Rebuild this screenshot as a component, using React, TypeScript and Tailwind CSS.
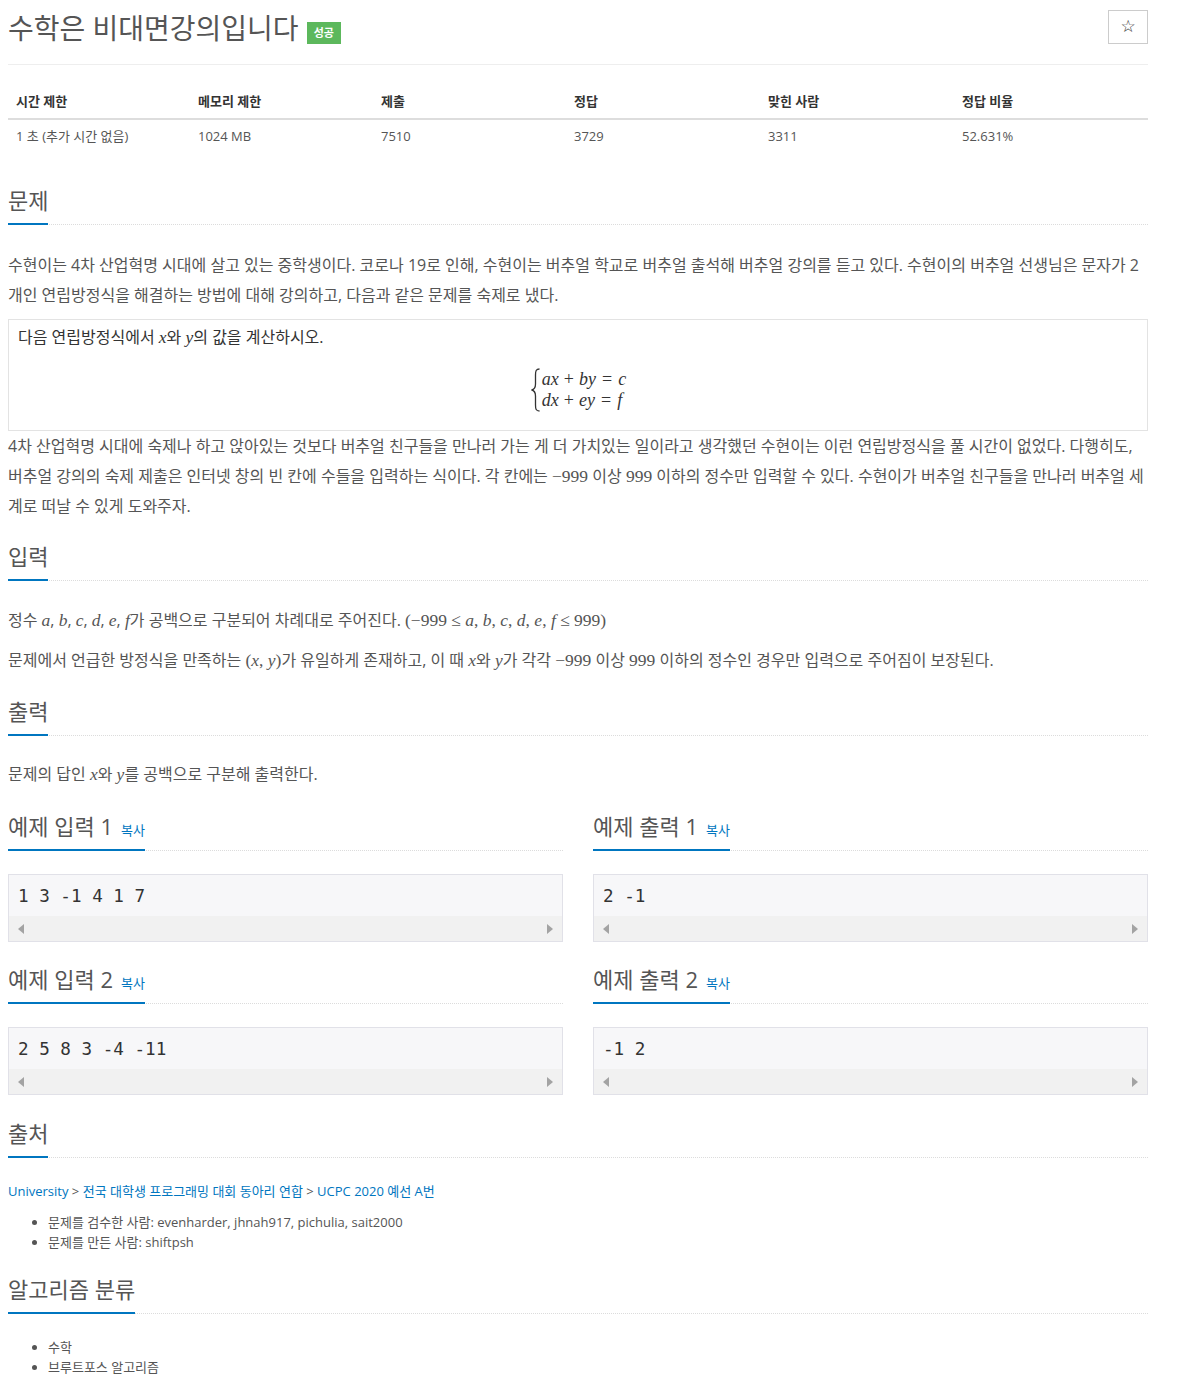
import React from 'react'

const SANS = "font-['Open_Sans','Noto_Sans_CJK_KR',sans-serif]"

const STATS = [
  { label: '시간 제한', value: '1 초 (추가 시간 없음)', w: 'w-[182px]' },
  { label: '메모리 제한', value: '1024 MB', w: 'w-[183px]' },
  { label: '제출', value: '7510', w: 'w-[193px]' },
  { label: '정답', value: '3729', w: 'w-[194px]' },
  { label: '맞힌 사람', value: '3311', w: 'w-[194px]' },
  { label: '정답 비율', value: '52.631%', w: 'w-[194px]' },
]

const SAMPLES = [
  { n: 1, input: '1 3 -1 4 1 7', output: '2 -1', mt: 'mt-[22px]' },
  { n: 2, input: '2 5 8 3 -4 -11', output: '-1 2', mt: 'mt-[22px]' },
]

// italic math variable
function V({ children }: { children: React.ReactNode }) {
  return <i className="font-['Liberation_Serif',serif] text-[17.5px]">{children}</i>
}

// upright math (numbers, operators)
function N({ children }: { children: React.ReactNode }) {
  return <span className="font-['Liberation_Serif',serif] text-[17.5px]">{children}</span>
}

function Headline({ children, extra }: { children: React.ReactNode; extra?: React.ReactNode }) {
  return (
    <div className="flex items-end border-b border-dotted border-[#dcdcdc]">
      <h2 className="-mb-px border-b-2 border-[#0076c0] pb-[8px] text-[22px] leading-[30px] text-[#555] font-normal">
        {children}
        {extra}
      </h2>
    </div>
  )
}

function CopyLink() {
  return <span className="ml-[8px] text-[13px] leading-[13px] text-[#0076c0]">복사</span>
}

function SampleBox({ text }: { text: string }) {
  return (
    <div className="border border-[#e1e1e8] bg-[#f7f7f9]">
      <div className="h-[41px] pl-[9px] pt-[2px] flex items-center font-['DejaVu_Sans_Mono',monospace] text-[17.6px] text-[#333] whitespace-pre">
        {text}
      </div>
      <div className="h-[25px] bg-[#f1f1f1] flex items-center justify-between px-[9px]">
        <svg width="6" height="10" viewBox="0 0 6 10"><path d="M6 0 L0 5 L6 10 Z" fill="#a3a3a3" /></svg>
        <svg width="6" height="10" viewBox="0 0 6 10"><path d="M0 0 L6 5 L0 10 Z" fill="#a3a3a3" /></svg>
      </div>
    </div>
  )
}

function Brace() {
  return (
    <svg width="11" height="44" viewBox="0 0 11 44" className="mr-[1px]">
      <path
        d="M9.5 1 C6 1 5.5 3 5.5 7 L5.5 16 C5.5 20 4.5 21.5 1.5 22 C4.5 22.5 5.5 24 5.5 28 L5.5 37 C5.5 41 6 43 9.5 43"
        fill="none"
        stroke="#333"
        strokeWidth="1.3"
      />
    </svg>
  )
}

export default function App() {
  return (
    <div className={`${SANS} bg-white min-h-screen px-[8px] pb-[10px] text-[#555]`}>
      <div className="w-[1140px]">
        {/* title row */}
        <div className="flex items-start justify-between pt-[10px]">
          <div className="flex items-start">
            <h1 className="text-[28px] leading-[36px] text-[#555] font-normal">수학은 비대면강의입니다</h1>
            <span className="ml-[8px] mt-[12px] h-[22px] px-[7px] flex items-center bg-[#5cb85c] text-white text-[11px] font-bold">성공</span>
          </div>
          <button className="w-[40px] h-[34px] border border-[#ccc] bg-white flex items-center justify-center text-[17px] text-[#333] font-['DejaVu_Sans',sans-serif]">
            ☆
          </button>
        </div>
        <div className="mt-[18px] h-px bg-[#eee]" />

        {/* stats table */}
        <table className="mt-[20px] w-full border-collapse text-[13px]">
          <thead>
            <tr className="border-b-2 border-[#ddd]">
              {STATS.map(s => (
                <th key={s.label} className={`${s.w} h-[34px] px-[8px] text-left font-bold text-[#333]`}>{s.label}</th>
              ))}
            </tr>
          </thead>
          <tbody>
            <tr>
              {STATS.map(s => (
                <td key={s.label} className="h-[34px] px-[8px] text-[#555]">{s.value}</td>
              ))}
            </tr>
          </tbody>
        </table>

        {/* 문제 */}
        <section className="mt-[32px]">
          <Headline>문제</Headline>
          <div className="mt-[25px] text-[16px] leading-[30px]">
            <div className="whitespace-nowrap">수현이는 4차 산업혁명 시대에 살고 있는 중학생이다. 코로나 19로 인해, 수현이는 버추얼 학교로 버추얼 출석해 버추얼 강의를 듣고 있다. 수현이의 버추얼 선생님은 문자가 2</div>
            <div className="whitespace-nowrap">개인 연립방정식을 해결하는 방법에 대해 강의하고, 다음과 같은 문제를 숙제로 냈다.</div>
          </div>
          <div className="mt-[9px] border border-[#e3e3e3] pt-[2px] pb-[18px] pl-[9px]">
            <div className="text-[16px] leading-[30px] text-[#333]">
              다음 연립방정식에서 <V>x</V>와 <V>y</V>의 값을 계산하시오.
            </div>
            <div className="mt-[16px] flex justify-center pr-[9px]">
              <div className="flex items-center text-[#333]">
                <Brace />
                <div className="font-['Liberation_Serif',serif] text-[18px] leading-[21px]">
                  <div>
                    <i>ax</i><span className="mx-[5px]">+</span><i>by</i><span className="mx-[6px]">=</span><i>c</i>
                  </div>
                  <div>
                    <i>dx</i><span className="mx-[5px]">+</span><i>ey</i><span className="mx-[6px]">=</span><i>f</i>
                  </div>
                </div>
              </div>
            </div>
          </div>
          <div className="text-[16px] leading-[30px]">
            <div className="whitespace-nowrap">4차 산업혁명 시대에 숙제나 하고 앉아있는 것보다 버추얼 친구들을 만나러 가는 게 더 가치있는 일이라고 생각했던 수현이는 이런 연립방정식을 풀 시간이 없었다. 다행히도,</div>
            <div className="whitespace-nowrap">버추얼 강의의 숙제 제출은 인터넷 창의 빈 칸에 수들을 입력하는 식이다. 각 칸에는 <N>−999</N> 이상 <N>999</N> 이하의 정수만 입력할 수 있다. 수현이가 버추얼 친구들을 만나러 버추얼 세</div>
            <div className="whitespace-nowrap">계로 떠날 수 있게 도와주자.</div>
          </div>
        </section>

        {/* 입력 */}
        <section className="mt-[20px]">
          <Headline>입력</Headline>
          <div className="mt-[24px] text-[16px] leading-[30px] whitespace-nowrap">
            정수 <V>a</V>, <V>b</V>, <V>c</V>, <V>d</V>, <V>e</V>, <V>f</V>가 공백으로 구분되어 차례대로 주어진다. <N>(−999 ≤ </N><V>a</V><N>, </N><V>b</V><N>, </N><V>c</V><N>, </N><V>d</V><N>, </N><V>e</V><N>, </N><V>f</V><N> ≤ 999)</N>
          </div>
          <div className="mt-[10px] text-[16px] leading-[30px] whitespace-nowrap">
            문제에서 언급한 방정식을 만족하는 <N>(</N><V>x</V><N>, </N><V>y</V><N>)</N>가 유일하게 존재하고, 이 때 <V>x</V>와 <V>y</V>가 각각 <N>−999</N> 이상 <N>999</N> 이하의 정수인 경우만 입력으로 주어짐이 보장된다.
          </div>
        </section>

        {/* 출력 */}
        <section className="mt-[21px]">
          <Headline>출력</Headline>
          <div className="mt-[23px] text-[16px] leading-[30px] whitespace-nowrap">
            문제의 답인 <V>x</V>와 <V>y</V>를 공백으로 구분해 출력한다.
          </div>
        </section>

        {/* samples */}
        {SAMPLES.map(s => (
          <div key={s.n} className={`${s.mt} grid grid-cols-2 gap-[30px]`}>
            <section>
              <Headline extra={<CopyLink />}>예제 입력 {s.n}</Headline>
              <div className="mt-[23px]"><SampleBox text={s.input} /></div>
            </section>
            <section>
              <Headline extra={<CopyLink />}>예제 출력 {s.n}</Headline>
              <div className="mt-[23px]"><SampleBox text={s.output} /></div>
            </section>
          </div>
        ))}

        {/* 출처 */}
        <section className="mt-[23px]">
          <Headline>출처</Headline>
          <div className="mt-[23px] text-[13px] leading-[20px]">
            <span className="text-[#0076c0]">University</span> &gt;{' '}
            <span className="text-[#0076c0]">전국 대학생 프로그래밍 대회 동아리 연합</span> &gt;{' '}
            <span className="text-[#0076c0]">UCPC 2020 예선 A번</span>
          </div>
          <ul className="mt-[11px] list-disc pl-[40px] text-[13px] leading-[20px]">
            <li>문제를 검수한 사람: evenharder, jhnah917, pichulia, sait2000</li>
            <li>문제를 만든 사람: shiftpsh</li>
          </ul>
        </section>

        {/* 알고리즘 분류 */}
        <section className="mt-[22px]">
          <Headline>알고리즘 분류</Headline>
          <ul className="mt-[23px] list-disc pl-[40px] text-[13px] leading-[20px]">
            <li>수학</li>
            <li>브루트포스 알고리즘</li>
          </ul>
        </section>
      </div>
    </div>
  )
}
